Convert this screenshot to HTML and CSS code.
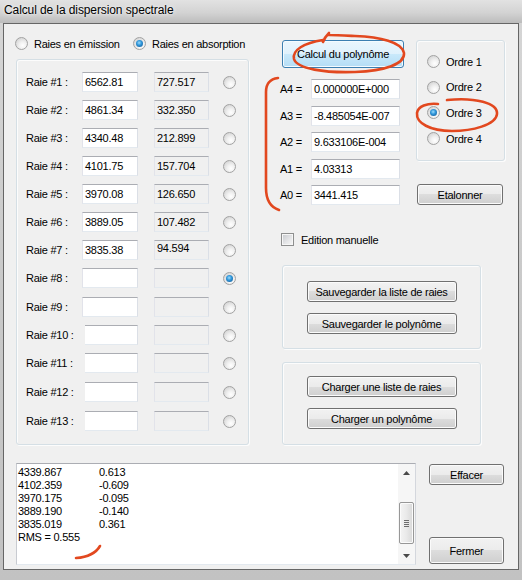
FILE: index.html
```html
<!DOCTYPE html>
<html>
<head>
<meta charset="utf-8">
<title>Calcul de la dispersion spectrale</title>
<link rel="stylesheet" href="styles.css">
</head>
<body>
<div class="frame">
  <div class="titlebar"><span class="title">Calcul de la dispersion spectrale</span></div>
  <div class="client">
    <div class="top">
      <div class="left">
        <div class="modes">
          <div class="opt first"><span class="radio"></span><span>Raies en émission</span></div>
          <div class="opt"><span class="radio on"></span><span>Raies en absorption</span></div>
        </div>
        <div class="group lines">
          <div class="row"><span class="lbl">Raie #1 :</span><span class="tb">6562.81</span><span class="tb ro">727.517</span><span class="radio rr"></span></div>
          <div class="row"><span class="lbl">Raie #2 :</span><span class="tb">4861.34</span><span class="tb ro">332.350</span><span class="radio rr"></span></div>
          <div class="row"><span class="lbl">Raie #3 :</span><span class="tb">4340.48</span><span class="tb ro">212.899</span><span class="radio rr"></span></div>
          <div class="row"><span class="lbl">Raie #4 :</span><span class="tb">4101.75</span><span class="tb ro">157.704</span><span class="radio rr"></span></div>
          <div class="row"><span class="lbl">Raie #5 :</span><span class="tb">3970.08</span><span class="tb ro">126.650</span><span class="radio rr"></span></div>
          <div class="row"><span class="lbl">Raie #6 :</span><span class="tb">3889.05</span><span class="tb ro">107.482</span><span class="radio rr"></span></div>
          <div class="row"><span class="lbl">Raie #7 :</span><span class="tb">3835.38</span><span class="tb ro up">94.594</span><span class="radio rr"></span></div>
          <div class="row"><span class="lbl">Raie #8 :</span><span class="tb"></span><span class="tb ro"></span><span class="radio rr on"></span></div>
          <div class="row wide"><span class="lbl">Raie #9 :</span><span class="tb"></span><span class="tb ro"></span><span class="radio rr"></span></div>
          <div class="row"><span class="lbl">Raie #10 :</span><span class="tb cut"></span><span class="tb ro"></span><span class="radio rr"></span></div>
          <div class="row"><span class="lbl">Raie #11 :</span><span class="tb cut"></span><span class="tb ro"></span><span class="radio rr"></span></div>
          <div class="row wide"><span class="lbl">Raie #12 :</span><span class="tb cut"></span><span class="tb ro"></span><span class="radio rr"></span></div>
          <div class="row wide"><span class="lbl">Raie #13 :</span><span class="tb cut"></span><span class="tb ro"></span><span class="radio rr"></span></div>
        </div>
      </div>
      <div class="right">
        <div class="coef">
          <div class="col1">
            <div class="btn default calc">Calcul du polynôme</div>
            <div class="arows">
              <div class="arow"><span class="albl">A4 =</span><span class="tb afield">0.000000E+000</span></div>
              <div class="arow"><span class="albl">A3 =</span><span class="tb afield">-8.485054E-007</span></div>
              <div class="arow"><span class="albl">A2 =</span><span class="tb afield">9.633106E-004</span></div>
              <div class="arow"><span class="albl">A1 =</span><span class="tb afield">4.03313</span></div>
              <div class="arow"><span class="albl">A0 =</span><span class="tb afield">3441.415</span></div>
            </div>
          </div>
          <div class="col2">
            <div class="group orders">
              <div class="ord"><span class="radio"></span><span>Ordre 1</span></div>
              <div class="ord"><span class="radio"></span><span>Ordre 2</span></div>
              <div class="ord"><span class="radio on"></span><span>Ordre 3</span></div>
              <div class="ord"><span class="radio"></span><span>Ordre 4</span></div>
            </div>
            <div class="btn etal">Etalonner</div>
          </div>
        </div>
        <div class="check"><span class="cbox"></span><span>Edition manuelle</span></div>
        <div class="group actions save">
          <div class="btn act">Sauvegarder la liste de raies</div>
          <div class="btn act">Sauvegarder le polynôme</div>
        </div>
        <div class="group actions load">
          <div class="btn act">Charger une liste de raies</div>
          <div class="btn act">Charger un polynôme</div>
        </div>
      </div>
    </div>
    <div class="bottom">
      <div class="log">
        <div class="logtext">
          <span>4339.867</span><span>0.613</span>
          <span>4102.359</span><span>-0.609</span>
          <span>3970.175</span><span>-0.095</span>
          <span>3889.190</span><span>-0.140</span>
          <span>3835.019</span><span>0.361</span>
          <span class="rms">RMS = 0.555</span>
        </div>
        <div class="scroll">
          <div class="sb-btn"><svg width="7" height="4" viewBox="0 0 7 4"><polygon points="0,4 7,4 3.5,0" fill="#4a4a4a"/></svg></div>
          <div class="sb-track"><div class="thumb"><span class="grip"></span></div></div>
          <div class="sb-btn"><svg width="7" height="4" viewBox="0 0 7 4"><polygon points="0,0 7,0 3.5,4" fill="#4a4a4a"/></svg></div>
        </div>
      </div>
      <div class="side">
        <div class="btn eff">Effacer</div>
        <div class="btn fermer">Fermer</div>
      </div>
    </div>
  </div>
  <svg class="marks" width="522" height="580" viewBox="0 0 522 580">
    <g fill="none" stroke="#e2481f" stroke-width="2.6" stroke-linecap="round" stroke-linejoin="round">
      <path d="M329 33 C 326 36, 324 39, 323 42 M 323 40 C 304 43, 292 50, 294 59 C 297 69, 325 73, 355 72 C 385 71, 405 64, 404 53 C 402 42, 380 37, 355 36 C 345 35.5, 336 35, 329 35"/>
      <path d="M278 78 C 270 79, 266 83, 266 92 L 266 188 C 266 200, 270 207, 279 210"/>
      <path d="M447 100 C 475 97, 498 103, 497 114 C 496 125, 472 131, 452 131 C 430 131, 416 123, 417 113 C 418 106, 427 103, 438 104"/>
      <path d="M100 546 C 96 553, 89 557, 76 558"/>
    </g>
  </svg>
</div>
</body>
</html>
```

FILE: styles.css
```css
html, body {
  margin: 0;
  padding: 0;
}

body {
  font-family: "Liberation Sans", Arial, sans-serif;
  font-size: 11px;
  letter-spacing: -0.25px;
  color: #000;
  background: #c8c8c8;
}

.frame {
  position: relative;
  width: 522px;
  height: 580px;
  overflow: hidden;
  background: linear-gradient(to bottom, #d6d6d6 0%, #c9c9c9 50%, #c2c2c2 100%);
}

.titlebar {
  height: 23px;
  box-sizing: border-box;
  padding: 2px 0 0 4px;
  background: linear-gradient(to bottom, #e2e2e2 0%, #d3d3d3 55%, #bcbcbc 100%);
}

.title {
  font-size: 12px;
  line-height: 16px;
  letter-spacing: -0.1px;
  color: #000;
  text-shadow: 0 0 5px #f4f4f4, 0 0 2px #f4f4f4;
}

.client {
  margin-left: 3px;
  width: 516px;
  height: 547px;
  box-sizing: border-box;
  border: 1px solid #666;
  background: #f0f0f0;
  padding: 13px 0 0 12px;
}

.top {
  display: flex;
  align-items: flex-start;
}

.left {
  width: 233px;
  flex: none;
}

/* radios */
.radio {
  position: relative;
  display: block;
  width: 13px;
  height: 13px;
  box-sizing: border-box;
  border-radius: 50%;
  border: 1px solid #a2a2a2;
  background: radial-gradient(circle at 62% 68%, #ffffff 0%, #f1f1f1 35%, #c9c9c9 100%);
  flex: none;
}

.radio.on::after {
  content: "";
  position: absolute;
  left: 2px;
  top: 2px;
  width: 7px;
  height: 7px;
  border-radius: 50%;
  background: radial-gradient(circle at 45% 40%, #9fdcfb 0%, #3299dc 40%, #0f4f8a 100%);
}

.modes {
  display: flex;
  height: 13px;
  margin-left: -1px;
  align-items: center;
}

.opt {
  display: flex;
  align-items: center;
  gap: 6px;
  white-space: nowrap;
}

.opt.first {
  width: 118px;
}

/* group boxes */
.group {
  box-sizing: border-box;
  border: 1px solid #d5dfe5;
  border-radius: 3px;
  box-shadow: inset 1px 1px 0 #fcfcfc, 1px 1px 0 #fcfcfc;
}

.lines {
  margin-top: 9px;
  height: 386px;
  padding: 12px 0 0 9px;
}

.row {
  display: flex;
  align-items: center;
  height: 20px;
  margin-top: 8px;
}

.row:first-child {
  margin-top: 0;
}

.row.wide {
  margin-top: 9px;
}

.lbl {
  width: 56px;
  flex: none;
  white-space: nowrap;
}

/* text boxes */
.tb {
  display: block;
  box-sizing: border-box;
  height: 20px;
  width: 56px;
  flex: none;
  padding-left: 2px;
  line-height: 18px;
  background: #fff;
  border: 1px solid;
  border-color: #abadb3 #dbdfe6 #e3e9ef #e2e3ea;
  white-space: nowrap;
  overflow: hidden;
}

.tb.cut {
  width: 53px;
  margin-left: 3px;
  border-left-width: 0;
}

.tb.ro {
  width: 55px;
  margin-left: 16px;
  background: #f0f0f0;
}

.tb.up {
  line-height: 14px;
}

.rr {
  margin-left: 14px;
}

/* right column */
.right {
  margin-left: 31px;
  margin-top: 3px;
  width: 225px;
  flex: none;
}

.coef {
  display: flex;
  align-items: flex-start;
}

.col1 {
  width: 124px;
  flex: none;
}

.col2 {
  width: 89px;
  margin-left: 12px;
  flex: none;
}

/* buttons */
.btn {
  box-sizing: border-box;
  display: flex;
  align-items: center;
  justify-content: center;
  border: 1px solid #707070;
  border-radius: 3px;
  background: linear-gradient(to bottom, #f2f2f2 0%, #ebebeb 50%, #dddddd 50%, #cfcfcf 100%);
  box-shadow: inset 0 0 0 1px #fbfbfb;
  white-space: nowrap;
}

.btn.default {
  border-color: #3c7fb1;
  background: linear-gradient(to bottom, #eaf6fd 0%, #dff1fc 50%, #c9e9fb 50%, #b4ddf5 100%);
  box-shadow: inset 0 0 0 1px #f4fbff;
}

.calc {
  margin-left: 2px;
  width: 122px;
  height: 28px;
}

.arows {
  margin-top: 11px;
  display: flex;
  flex-direction: column;
  gap: 6.5px;
}

.arow {
  display: flex;
  align-items: center;
  height: 20px;
}

.albl {
  width: 31px;
  flex: none;
}

.tb.afield {
  width: 89px;
}

.orders {
  height: 121px;
  padding: 14px 0 0 10px;
  display: flex;
  flex-direction: column;
  gap: 12.7px;
}

.ord {
  display: flex;
  align-items: center;
  gap: 6px;
  height: 13px;
  white-space: nowrap;
}

.etal {
  margin-top: 23px;
  margin-left: 1px;
  width: 86px;
  height: 21px;
}

.check {
  margin-top: 28px;
  margin-left: 1px;
  display: flex;
  align-items: center;
  gap: 7px;
  height: 13px;
}

.cbox {
  display: block;
  width: 13px;
  height: 13px;
  box-sizing: border-box;
  border: 1px solid #8e8f8f;
  background: linear-gradient(135deg, #c6c8cc 0%, #e4e5e7 55%, #f7f7f7 100%);
  box-shadow: inset 0 0 0 1px #f6f6f6;
  flex: none;
}

.actions {
  margin-left: 2px;
  width: 199px;
  display: flex;
  flex-direction: column;
  align-items: center;
  gap: 11px;
}

.save {
  margin-top: 19px;
  height: 84px;
  padding-top: 15px;
}

.load {
  margin-top: 13px;
  height: 83px;
  padding-top: 13px;
}

.act {
  width: 150px;
  height: 21px;
  flex: none;
}

/* bottom */
.bottom {
  display: flex;
  margin-top: 18px;
}

.log {
  width: 400px;
  height: 102px;
  box-sizing: border-box;
  border: 1px solid;
  border-color: #abadb3 #d4d7dd #e3e9ef #c8cbd1;
  background: #fff;
  display: flex;
  flex: none;
}

.logtext {
  flex: 1;
  display: grid;
  grid-template-columns: 81px auto;
  grid-auto-rows: 13px;
  line-height: 13px;
  padding: 2px 0 0 1px;
  align-content: start;
}

.rms {
  grid-column: 1 / 3;
}

.scroll {
  width: 17px;
  flex: none;
  display: flex;
  flex-direction: column;
  background: #f6f6f6;
}

.sb-btn {
  height: 17px;
  display: flex;
  align-items: center;
  justify-content: center;
  flex: none;
}

.sb-track {
  flex: 1;
  padding-top: 21px;
}

.thumb {
  margin-left: 1px;
  width: 15px;
  height: 42px;
  box-sizing: border-box;
  border: 1px solid #979797;
  border-radius: 2px;
  background: linear-gradient(to right, #f4f4f4 0%, #e9e9e9 50%, #d8d8d8 100%);
  box-shadow: inset 0 0 0 1px #fbfbfb;
  display: flex;
  align-items: center;
  justify-content: center;
}

.grip {
  display: block;
  width: 5px;
  height: 7px;
  background: repeating-linear-gradient(to bottom, #6d6d6d 0, #6d6d6d 1px, transparent 1px, transparent 2px);
}

.side {
  margin-left: 13px;
  width: 75px;
  height: 102px;
  display: flex;
  flex-direction: column;
  flex: none;
}

.eff {
  margin-top: 1px;
  height: 21px;
}

.fermer {
  margin-top: auto;
  margin-bottom: 1px;
  height: 27px;
}

/* hand-drawn annotations over the dialog */
.marks {
  position: absolute;
  left: 0;
  top: 0;
  pointer-events: none;
}
```
